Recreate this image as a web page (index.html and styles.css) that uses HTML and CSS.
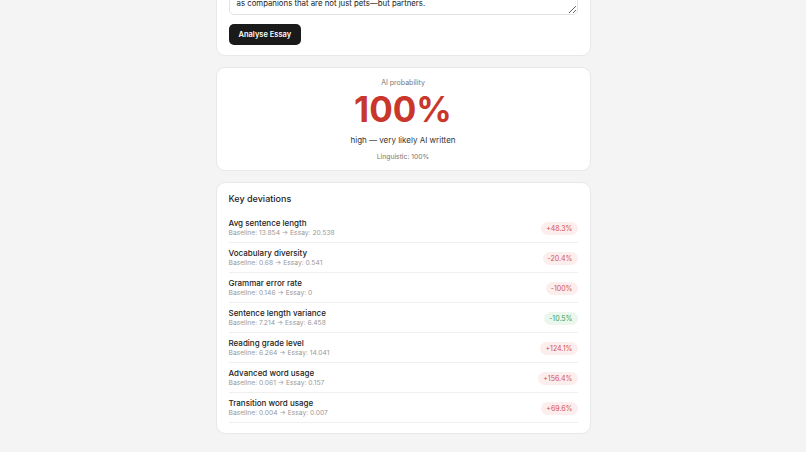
FILE: index.html
```html
<!DOCTYPE html>
<html>
  <head>
    <title>Essay analyser</title>
    <link rel="stylesheet" href="styles.css">
  </head>
  <body>
    <main class="page">
      <section class="card essay">
        <textarea class="essay-input">They guard our homes and guide those who cannot see,
and many families now think of them
as companions that are not just pets—but partners.</textarea>
        <button class="analyse">Analyse Essay</button>
      </section>

      <section class="card score">
        <div class="score-label">AI probability</div>
        <div class="score-value">100%</div>
        <div class="score-verdict">high — very likely AI written</div>
        <div class="score-detail">Linguistic: 100%</div>
      </section>

      <section class="card deviations">
        <h2>Key deviations</h2>
        <div class="row">
          <div>
            <div class="row-title">Avg sentence length</div>
            <div class="row-sub">Baseline: 13.854 → Essay: 20.538</div>
          </div>
          <span class="pill up">+48.3%</span>
        </div>
        <div class="row">
          <div>
            <div class="row-title">Vocabulary diversity</div>
            <div class="row-sub">Baseline: 0.68 → Essay: 0.541</div>
          </div>
          <span class="pill up">-20.4%</span>
        </div>
        <div class="row">
          <div>
            <div class="row-title">Grammar error rate</div>
            <div class="row-sub">Baseline: 0.146 → Essay: 0</div>
          </div>
          <span class="pill up">-100%</span>
        </div>
        <div class="row">
          <div>
            <div class="row-title">Sentence length variance</div>
            <div class="row-sub">Baseline: 7.214 → Essay: 6.458</div>
          </div>
          <span class="pill ok">-10.5%</span>
        </div>
        <div class="row">
          <div>
            <div class="row-title">Reading grade level</div>
            <div class="row-sub">Baseline: 6.264 → Essay: 14.041</div>
          </div>
          <span class="pill up">+124.1%</span>
        </div>
        <div class="row">
          <div>
            <div class="row-title">Advanced word usage</div>
            <div class="row-sub">Baseline: 0.061 → Essay: 0.157</div>
          </div>
          <span class="pill up">+156.4%</span>
        </div>
        <div class="row">
          <div>
            <div class="row-title">Transition word usage</div>
            <div class="row-sub">Baseline: 0.004 → Essay: 0.007</div>
          </div>
          <span class="pill up">+69.6%</span>
        </div>
      </section>
    </main>
  </body>
</html>
```

FILE: styles.css
```css
body {
  margin: 0;
  background-color: #f4f4f4;
  font-family: Inter, "Liberation Sans", sans-serif;
  color: #1d1d1f;
}

.page {
  width: 375px;
  margin: -53px auto 0;
  padding-bottom: 20px;
  display: flex;
  flex-direction: column;
  gap: 11px;
}

.card {
  background-color: white;
  border: 1px solid #e8e8e8;
  border-radius: 9px;
  padding: 12px;
}

/* essay input */

.essay {
  padding-bottom: 10px;
}

.essay-input {
  display: block;
  box-sizing: border-box;
  width: 100%;
  height: 55px;
  padding: 5px 7px;
  border: 1px solid #e3e3e3;
  border-radius: 5px;
  font-family: inherit;
  font-size: 7.8px;
  line-height: 15px;
  color: #222;
  overflow: hidden;
  resize: vertical;
}

.analyse {
  margin-top: 9px;
  height: 21px;
  padding: 0 10px;
  border: none;
  border-radius: 5px;
  background-color: #1a1a1a;
  color: white;
  font-family: inherit;
  font-size: 7.5px;
  font-weight: 600;
}

/* score */

.score {
  padding: 10px 12px 8px;
  text-align: center;
}

.score-label {
  font-size: 7px;
  line-height: 9px;
  color: #777;
}

.score-value {
  margin-top: 4px;
  font-size: 35px;
  line-height: 37px;
  font-weight: 700;
  color: #c9372c;
}

.score-verdict {
  margin-top: 7px;
  font-size: 8px;
  line-height: 11px;
  color: #333;
}

.score-detail {
  margin-top: 6px;
  font-size: 6.8px;
  line-height: 10px;
  color: #777;
}

/* deviations */

.deviations {
  padding: 11px 12px 10px;
}

.deviations h2 {
  margin: 0 0 9px;
  font-size: 9px;
  line-height: 10px;
  font-weight: 500;
}

.row {
  display: flex;
  align-items: center;
  justify-content: space-between;
  padding: 5px 0 4px;
  border-bottom: 1px solid #efefef;
}

.row-title {
  font-size: 8px;
  line-height: 11px;
  font-weight: 500;
  color: #222;
}

.row-sub {
  font-size: 6.7px;
  line-height: 9px;
  color: #999;
}

.pill {
  padding: 2px 5px;
  border-radius: 7px;
  font-size: 7px;
  line-height: 9px;
}

.pill.up {
  background-color: #fdeeee;
  color: #d4524c;
}

.pill.ok {
  background-color: #ebf7ed;
  color: #3f9b50;
}
```
